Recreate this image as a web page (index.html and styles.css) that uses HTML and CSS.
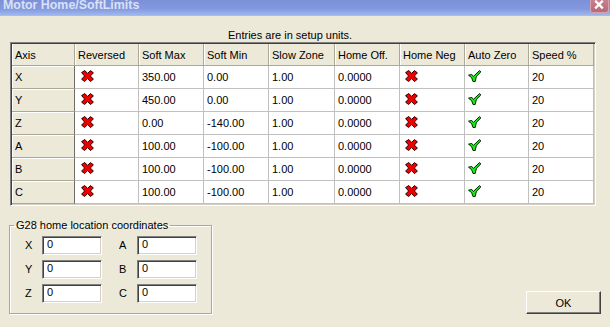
FILE: index.html
```html
<!DOCTYPE html>
<html>
<head>
<meta charset="utf-8">
<link rel="stylesheet" href="styles.css">
</head>
<body>
<div class="window">
  <div class="titlebar">
    <span class="caption">Motor Home/SoftLimits</span>
    <span class="close"><svg width="19" height="13" viewBox="0 0 19 13"><path d="M5.5 1.5 L13.5 9.5 M13.5 1.5 L5.5 9.5" stroke="#fff" stroke-width="2.4" fill="none"/></svg></span>
  </div>
  <div class="main">
    <div class="note">Entries are in setup units.</div>
    <div class="frame">
      <table class="grid">
        <colgroup>
          <col class="c63"><col class="c64"><col class="c65"><col class="c65"><col class="c66"><col class="c65"><col class="c65"><col class="c64"><col class="c65">
        </colgroup>
        <thead>
          <tr><th>Axis</th><th>Reversed</th><th>Soft Max</th><th>Soft Min</th><th>Slow Zone</th><th>Home Off.</th><th>Home Neg</th><th>Auto Zero</th><th>Speed %</th></tr>
        </thead>
        <tbody>
          <tr><td class="ax">X</td><td class="ic rev"><svg class="x" viewBox="0 0 13 12"><path d="M0.6 2.6 L3.8 0.5 L6.6 3.4 L9.4 0.6 L12.4 2.8 L9.4 6 L12.4 9.2 L9.4 11.5 L6.6 8.6 L3.6 11.5 L0.6 9.2 L3.6 6 Z"/></svg></td><td>350.00</td><td>0.00</td><td>1.00</td><td>0.0000</td><td class="ic neg"><svg class="x" viewBox="0 0 13 12"><path d="M0.6 2.6 L3.8 0.5 L6.6 3.4 L9.4 0.6 L12.4 2.8 L9.4 6 L12.4 9.2 L9.4 11.5 L6.6 8.6 L3.6 11.5 L0.6 9.2 L3.6 6 Z"/></svg></td><td class="ic az"><svg class="ok" viewBox="0 0 14 12"><path d="M0.5 5.2 L3.8 4.4 L5.4 6.4 L11.6 0.5 L12.8 2 L8.4 6.4 L7.2 11.5 L5 11.5 L3.6 7.6 Z"/></svg></td><td>20</td></tr>
          <tr><td class="ax">Y</td><td class="ic rev"><svg class="x" viewBox="0 0 13 12"><path d="M0.6 2.6 L3.8 0.5 L6.6 3.4 L9.4 0.6 L12.4 2.8 L9.4 6 L12.4 9.2 L9.4 11.5 L6.6 8.6 L3.6 11.5 L0.6 9.2 L3.6 6 Z"/></svg></td><td>450.00</td><td>0.00</td><td>1.00</td><td>0.0000</td><td class="ic neg"><svg class="x" viewBox="0 0 13 12"><path d="M0.6 2.6 L3.8 0.5 L6.6 3.4 L9.4 0.6 L12.4 2.8 L9.4 6 L12.4 9.2 L9.4 11.5 L6.6 8.6 L3.6 11.5 L0.6 9.2 L3.6 6 Z"/></svg></td><td class="ic az"><svg class="ok" viewBox="0 0 14 12"><path d="M0.5 5.2 L3.8 4.4 L5.4 6.4 L11.6 0.5 L12.8 2 L8.4 6.4 L7.2 11.5 L5 11.5 L3.6 7.6 Z"/></svg></td><td>20</td></tr>
          <tr><td class="ax">Z</td><td class="ic rev"><svg class="x" viewBox="0 0 13 12"><path d="M0.6 2.6 L3.8 0.5 L6.6 3.4 L9.4 0.6 L12.4 2.8 L9.4 6 L12.4 9.2 L9.4 11.5 L6.6 8.6 L3.6 11.5 L0.6 9.2 L3.6 6 Z"/></svg></td><td>0.00</td><td>-140.00</td><td>1.00</td><td>0.0000</td><td class="ic neg"><svg class="x" viewBox="0 0 13 12"><path d="M0.6 2.6 L3.8 0.5 L6.6 3.4 L9.4 0.6 L12.4 2.8 L9.4 6 L12.4 9.2 L9.4 11.5 L6.6 8.6 L3.6 11.5 L0.6 9.2 L3.6 6 Z"/></svg></td><td class="ic az"><svg class="ok" viewBox="0 0 14 12"><path d="M0.5 5.2 L3.8 4.4 L5.4 6.4 L11.6 0.5 L12.8 2 L8.4 6.4 L7.2 11.5 L5 11.5 L3.6 7.6 Z"/></svg></td><td>20</td></tr>
          <tr><td class="ax">A</td><td class="ic rev"><svg class="x" viewBox="0 0 13 12"><path d="M0.6 2.6 L3.8 0.5 L6.6 3.4 L9.4 0.6 L12.4 2.8 L9.4 6 L12.4 9.2 L9.4 11.5 L6.6 8.6 L3.6 11.5 L0.6 9.2 L3.6 6 Z"/></svg></td><td>100.00</td><td>-100.00</td><td>1.00</td><td>0.0000</td><td class="ic neg"><svg class="x" viewBox="0 0 13 12"><path d="M0.6 2.6 L3.8 0.5 L6.6 3.4 L9.4 0.6 L12.4 2.8 L9.4 6 L12.4 9.2 L9.4 11.5 L6.6 8.6 L3.6 11.5 L0.6 9.2 L3.6 6 Z"/></svg></td><td class="ic az"><svg class="ok" viewBox="0 0 14 12"><path d="M0.5 5.2 L3.8 4.4 L5.4 6.4 L11.6 0.5 L12.8 2 L8.4 6.4 L7.2 11.5 L5 11.5 L3.6 7.6 Z"/></svg></td><td>20</td></tr>
          <tr><td class="ax">B</td><td class="ic rev"><svg class="x" viewBox="0 0 13 12"><path d="M0.6 2.6 L3.8 0.5 L6.6 3.4 L9.4 0.6 L12.4 2.8 L9.4 6 L12.4 9.2 L9.4 11.5 L6.6 8.6 L3.6 11.5 L0.6 9.2 L3.6 6 Z"/></svg></td><td>100.00</td><td>-100.00</td><td>1.00</td><td>0.0000</td><td class="ic neg"><svg class="x" viewBox="0 0 13 12"><path d="M0.6 2.6 L3.8 0.5 L6.6 3.4 L9.4 0.6 L12.4 2.8 L9.4 6 L12.4 9.2 L9.4 11.5 L6.6 8.6 L3.6 11.5 L0.6 9.2 L3.6 6 Z"/></svg></td><td class="ic az"><svg class="ok" viewBox="0 0 14 12"><path d="M0.5 5.2 L3.8 4.4 L5.4 6.4 L11.6 0.5 L12.8 2 L8.4 6.4 L7.2 11.5 L5 11.5 L3.6 7.6 Z"/></svg></td><td>20</td></tr>
          <tr><td class="ax">C</td><td class="ic rev"><svg class="x" viewBox="0 0 13 12"><path d="M0.6 2.6 L3.8 0.5 L6.6 3.4 L9.4 0.6 L12.4 2.8 L9.4 6 L12.4 9.2 L9.4 11.5 L6.6 8.6 L3.6 11.5 L0.6 9.2 L3.6 6 Z"/></svg></td><td>100.00</td><td>-100.00</td><td>1.00</td><td>0.0000</td><td class="ic neg"><svg class="x" viewBox="0 0 13 12"><path d="M0.6 2.6 L3.8 0.5 L6.6 3.4 L9.4 0.6 L12.4 2.8 L9.4 6 L12.4 9.2 L9.4 11.5 L6.6 8.6 L3.6 11.5 L0.6 9.2 L3.6 6 Z"/></svg></td><td class="ic az"><svg class="ok" viewBox="0 0 14 12"><path d="M0.5 5.2 L3.8 4.4 L5.4 6.4 L11.6 0.5 L12.8 2 L8.4 6.4 L7.2 11.5 L5 11.5 L3.6 7.6 Z"/></svg></td><td>20</td></tr>
        </tbody>
      </table>
    </div>
    <div class="bottom">
      <fieldset class="group">
        <legend>G28 home location coordinates</legend>
        <div class="coords">
          <span class="lbl">X</span><span class="edit">0</span>
          <span class="lbl">A</span><span class="edit">0</span>
          <span class="lbl">Y</span><span class="edit">0</span>
          <span class="lbl">B</span><span class="edit">0</span>
          <span class="lbl">Z</span><span class="edit">0</span>
          <span class="lbl">C</span><span class="edit">0</span>
        </div>
      </fieldset>
      <button class="okbtn">OK</button>
    </div>
  </div>
</div>
</body>
</html>
```
FILE: styles.css
```css
* { box-sizing: border-box; }
html, body {
  margin: 0;
  padding: 0;
  background: #ece9d8;
  width: 610px;
  height: 327px;
  overflow: hidden;
  font-family: "Liberation Sans", Arial, sans-serif;
  font-size: 11px;
  color: #000;
}
.window { width: 610px; height: 327px; }
.titlebar {
  height: 16px;
  display: flex;
  align-items: flex-start;
  background: linear-gradient(#7c90d9 0%, #8399de 55%, #9bb3ec 90%, #a8c0f2 100%);
  overflow: hidden;
  padding-left: 3px;
}
.caption {
  font-weight: bold;
  font-size: 12.4px;
  line-height: 13px;
  margin-top: -1px;
  color: #d9e1f6;
  white-space: nowrap;
}
.close {
  margin-left: auto;
  margin-right: 1px;
  width: 19px;
  height: 13px;
  background: linear-gradient(#c7808d, #b9687a);
  border: 1px solid #d8a0ac;
  border-top: none;
  border-radius: 0 0 3px 3px;
  display: flex;
}
.close svg { display: block; margin: -1px 0 0 -1px; }
.main { padding: 0 14px 0 10px; }
.note {
  margin-top: 13px;
  height: 13px;
  line-height: 13px;
  padding-left: 218px;
}
.frame {
  width: 586px;
  border-style: solid;
  border-width: 1px;
  border-color: #808080 #ffffff #ffffff #808080;
  box-shadow: inset 1px 1px 0 #404040, inset -1px -1px 0 #d4d0c8;
  padding: 1px;
  background: #fff;
}
.grid {
  width: 582px;
  table-layout: fixed;
  border-collapse: separate;
  border-spacing: 0;
}
.c63 { width: 63px; }
.c64 { width: 64px; }
.c65 { width: 65px; }
.c66 { width: 66px; }
.grid th {
  height: 22px;
  padding: 0 0 0 3px;
  text-align: left;
  font-weight: normal;
  background: #ece9d8;
  border-right: 1px solid #aca899;
  border-bottom: 1px solid #aca899;
  box-shadow: inset 1px 0 0 #fff;
  white-space: nowrap;
  overflow: hidden;
  vertical-align: middle;
}
.grid td {
  height: 23px;
  padding: 0 0 0 3px;
  border-right: 1px solid #c0c0c0;
  border-bottom: 1px solid #c0c0c0;
  vertical-align: middle;
  white-space: nowrap;
  overflow: hidden;
}
.grid td.ax {
  background: #ece9d8;
  border-right: 1px solid #716f64;
  border-bottom: 1px solid #aca899;
  box-shadow: inset 1px 1px 0 #fff;
}
.grid td.ic { padding: 0; }
.grid td.rev { padding-left: 6px; }
.grid td.neg { padding-left: 5px; }
.grid td.az { padding-left: 3px; }
svg.x, svg.ok { display: block; margin-top: -2px; }
svg.x { width: 13px; height: 12px; }
svg.x path { fill: #ee0000; stroke: #2a0000; stroke-width: 1; stroke-linejoin: round; }
svg.ok { width: 14px; height: 12px; }
svg.ok path { fill: #18e818; stroke: #002a00; stroke-width: 1; stroke-linejoin: round; }
.bottom {
  display: flex;
  justify-content: space-between;
  align-items: flex-end;
  margin-top: 13px;
}
.group {
  margin: 0 0 0 -1px;
  width: 203px;
  padding: 4px 0 10px 0;
  border: 1px solid #aca899;
  box-shadow: 1px 1px 0 #fff, inset 1px 1px 0 #fff;
}
.group legend {
  padding: 0 2px;
  margin-left: 4px;
  line-height: 13px;
  height: 13px;
  white-space: nowrap;
}
.coords {
  display: grid;
  grid-template-columns: 17px 60px 17px 18px 60px;
  grid-auto-rows: 19px;
  row-gap: 5px;
  padding-left: 15px;
  align-items: center;
}
.coords .lbl { line-height: 19px; }
.coords .lbl:nth-child(4n+3) { grid-column: 4; }
.coords .edit {
  height: 19px;
  line-height: 15px;
  background: #fff;
  border-style: solid;
  border-width: 1px;
  border-color: #808080 #ffffff #ffffff #808080;
  box-shadow: inset 1px 1px 0 #404040, inset -1px -1px 0 #d4d0c8;
  padding-left: 4px;
}
.okbtn {
  width: 75px;
  height: 23px;
  margin: 0 -5px 0 0;
  background: #ece9d8;
  font-family: "Liberation Sans", Arial, sans-serif;
  font-size: 11px;
  color: #000;
  border-style: solid;
  border-width: 1px;
  border-color: #ffffff #404040 #404040 #ffffff;
  box-shadow: inset -1px -1px 0 #808080;
  padding: 0;
}
```
